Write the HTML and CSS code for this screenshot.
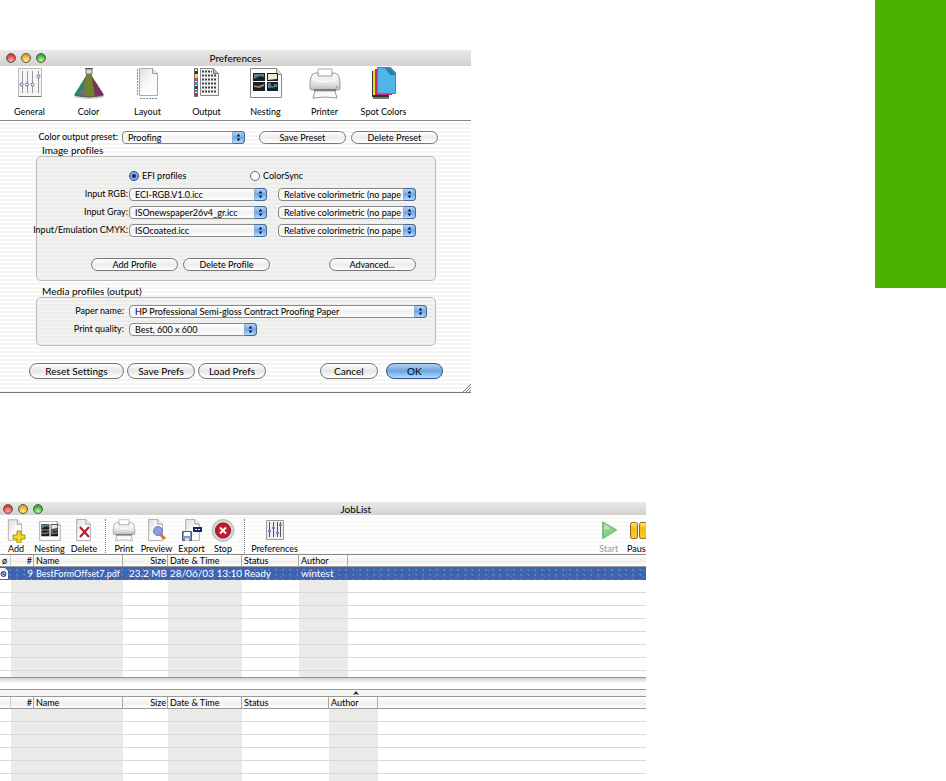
FILE: index.html
```html
<!DOCTYPE html>
<html lang="en">
<head>
<meta charset="utf-8">
<title>Preferences and JobList</title>
<link rel="stylesheet" href="styles.css">
</head>
<body>
<svg class="defs" aria-hidden="true">
  <defs>
    <linearGradient id="paper" x1="0" y1="0" x2="1" y2="1"><stop offset="0" stop-color="#ddd"/><stop offset=".5" stop-color="#fafafa"/><stop offset="1" stop-color="#fff"/></linearGradient>
    <linearGradient id="shell" x1="0" y1="0" x2="0" y2="1"><stop offset="0" stop-color="#fff"/><stop offset=".6" stop-color="#e6e6e6"/><stop offset="1" stop-color="#bbb"/></linearGradient>
    <linearGradient id="flask" x1="0" y1="0" x2="1" y2="0"><stop offset="0" stop-color="#1c9060"/><stop offset=".3" stop-color="#68746c"/><stop offset=".55" stop-color="#6c7c20"/><stop offset=".75" stop-color="#7a4040"/><stop offset="1" stop-color="#502090"/></linearGradient>
    <linearGradient id="gold" x1="0" y1="0" x2="0" y2="1"><stop offset="0" stop-color="#fff080"/><stop offset=".35" stop-color="#f4bc18"/><stop offset="1" stop-color="#fccc30"/></linearGradient>
  </defs>
  <symbol id="arrows" viewBox="0 0 12 12"><path d="M6 2 8 5H4zM6 10 4 7h4z" fill="#061640"/></symbol>
  <symbol id="page" viewBox="0 0 18 24"><path d="M1.500.5h10l5 5v18h-15z" fill="url(#paper)" stroke="#aaa"/><path d="M11.500.5v5h5" fill="#eee" stroke="#999"/></symbol>
  <symbol id="photos" viewBox="0 0 32 30">
    <path d="M.5.500h26l5 6v23H.5z" fill="#fcfcfc" stroke="#888"/><path d="M26.500.5v6h5" fill="#ddd" stroke="#888"/>
    <path d="M3 5h12v8H3zM17 5h11v8H17zM3 14h12v9H3zM17 14h11v9H17z" fill="#182024"/>
    <path d="M4 6h10v3l-4-1-6 3z" fill="#638086"/><path d="M18 6h9v5l-9 1z" fill="#ece8d8"/><path d="M4 17l4 1 6-2v2l-5 2-5-1z" fill="#b87070"/><path d="M18 15h3v3h3v-2h3v3l-9 1z" fill="#4d8090"/>
  </symbol>
  <symbol id="printer" viewBox="0 0 32 32">
    <path d="M9 8V1h14v7" fill="#fff" stroke="#aaa"/>
    <path d="M2 9q1-4 5-4h2v3h14V5h2q4 0 5 4l1 6v6l-2 1H3l-2-1v-6z" fill="url(#shell)" stroke="#999"/>
    <path d="M3 11q13 5 26 0" fill="none" stroke="#fff"/><path d="M5 21h22v2H5z" fill="#777"/>
    <path d="M6 23h20l2 7q-12-2-24 0z" fill="#fafafa" stroke="#999"/><path d="M27 18h2v2h-2z" fill="#8c8"/>
  </symbol>
</svg>

<main class="figures">
  <section class="window prefs" aria-label="Preferences">
    <header class="titlebar">
      <div class="lights"><button class="light red" aria-label="Close"></button><button class="light amber" aria-label="Minimize"></button><button class="light green" aria-label="Zoom"></button></div>
      <h1>Preferences</h1>
    </header>
    <nav class="tabs">
      <button><svg width="24" height="34" viewBox="0 0 24 34"><path d="M.5 2.500h23v28H.5z" fill="#f5f5f5" stroke="#bbb"/><path d="M.5 30.500h23" stroke="#777"/><path d="M4.500 5v22M9.500 5v22M14.500 5v22M20.500 5v22" stroke="#999"/><g fill="#fff" stroke="#4666c0"><circle cx="3.500" cy="18.500" r="1.500"/><circle cx="9" cy="18.500" r="1.500"/><circle cx="14.500" cy="18.500" r="1.500"/><circle cx="20.500" cy="10.500" r="1.500"/></g></svg>General</button>
      <button><svg width="32" height="34" viewBox="0 0 32 34"><ellipse cx="16" cy="30" rx="15" ry="3" fill="#ccc"/><path d="M13 3v7L1 29q15 4 30 0L19 10V3z" fill="url(#flask)"/><path d="M14 3h4v8l4 18q-6 2-12 0z" fill="#74842c"/><path d="M2 29l11-19-4 13z" fill="#218b55"/><path d="M7 30l6-18-1 19z" fill="#6a746c"/><path d="M19 13l11 16-8 1z" fill="#783460"/><path d="M13 3h6v5h-6z" fill="#d8ddd8" stroke="#777"/><path d="M12 2.500h8" stroke="#555"/><path d="M2 29.500q14 3 28 0" fill="none" stroke="#555"/></svg>Color</button>
      <button><svg width="24" height="34" viewBox="0 0 24 34"><path d="M3.500 2.500h13l5 5v22h-18z" fill="url(#paper)" stroke="#aaa"/><path d="M16.500 2.500v5h5" fill="#eee" stroke="#999"/><path d="M1.500 3v27M4 32.500h18" stroke="#888" stroke-dasharray="2 1"/></svg>Layout</button>
      <button><svg width="26" height="34" viewBox="0 0 26 34"><path d="M6.500 2.500h13l5 5v22h-18z" fill="#f5f5f5" stroke="#888"/><path d="M8 5.500h10M8 9.500h15M8 13.500h15M8 17.500h15M8 21.500h15M8 25.500h15" stroke="#444" stroke-width="2" stroke-dasharray="2 1"/><path d="M19.500 2.500v5h5" fill="#bbb" stroke="#777"/><path d="M.5 2.500h3v28h-3z" fill="#eee" stroke="#666"/><path d="M1 5h3v3H1z" fill="#333"/><path d="M1 8h3v3H1z" fill="#e8e020"/><path d="M1 12h3v3H1z" fill="#e03088"/><path d="M1 16h3v3H1z" fill="#28a0c8"/><path d="M1 20h3v3H1z" fill="#503090"/><path d="M1 24h3v2H1z" fill="#20a878"/><path d="M1 27h3v3H1z" fill="#e02040"/></svg>Output</button>
      <button><svg width="32" height="34" viewBox="0 -2 32 34"><use href="#photos" width="32" height="30"/></svg>Nesting</button>
      <button><svg width="32" height="34" viewBox="0 -2 32 34"><use href="#printer" width="32" height="32"/></svg>Printer</button>
      <button><svg width="26" height="34" viewBox="0 0 26 34"><path d="M2 8h16v25H2z" fill="#777"/><path d="M1 5h17v26H1z" fill="#35342c"/><path d="M2 4h17v25H2z" fill="#ece020"/><path d="M4 3h17v26H4z" fill="#c52878"/><path d="M6.500 1.500h13l5 5v21h-18z" fill="#4db6e6" stroke="#2c8dbb"/><path d="M14 2h5l5 5v2h-5z" fill="#287fae"/></svg>Spot Colors</button>
    </nav>
    <form class="pane" onsubmit="return false">
      <div class="row preset">
        <label for="preset">Color output preset:</label>
        <span class="popup"><select id="preset"><option>Proofing</option></select><svg><use href="#arrows"/></svg></span>
        <button class="push first">Save Preset</button><button class="push">Delete Preset</button>
      </div>
      <h2>Image profiles</h2>
      <div class="group image">
        <div class="row radios">
          <label><input type="radio" name="engine" checked>EFI profiles</label>
          <label><input type="radio" name="engine">ColorSync</label>
        </div>
        <div class="row profile"><label for="rgb">Input RGB:</label>
          <span class="popup"><select id="rgb"><option>ECI-RGB.V1.0.icc</option></select><svg><use href="#arrows"/></svg></span>
          <span class="popup"><select aria-label="RGB intent"><option>Relative colorimetric (no pape</option></select><svg><use href="#arrows"/></svg></span></div>
        <div class="row profile"><label for="gray">Input Gray:</label>
          <span class="popup"><select id="gray"><option>ISOnewspaper26v4_gr.icc</option></select><svg><use href="#arrows"/></svg></span>
          <span class="popup"><select aria-label="Gray intent"><option>Relative colorimetric (no pape</option></select><svg><use href="#arrows"/></svg></span></div>
        <div class="row profile"><label for="cmyk">Input/Emulation CMYK:</label>
          <span class="popup"><select id="cmyk"><option>ISOcoated.icc</option></select><svg><use href="#arrows"/></svg></span>
          <span class="popup"><select aria-label="CMYK intent"><option>Relative colorimetric (no pape</option></select><svg><use href="#arrows"/></svg></span></div>
        <div class="row tools"><button class="push">Add Profile</button><button class="push">Delete Profile</button><button class="push last">Advanced...</button></div>
      </div>
      <h2>Media profiles (output)</h2>
      <div class="group media">
        <div class="row"><label for="paper-name">Paper name:</label><span class="popup wide"><select id="paper-name"><option>HP Professional Semi-gloss Contract Proofing Paper</option></select><svg><use href="#arrows"/></svg></span></div>
        <div class="row"><label for="quality">Print quality:</label><span class="popup"><select id="quality"><option>Best, 600 x 600</option></select><svg><use href="#arrows"/></svg></span></div>
      </div>
      <footer class="actions">
        <button class="big reset">Reset Settings</button><button class="big">Save Prefs</button><button class="big">Load Prefs</button>
        <button class="big cancel">Cancel</button><button class="big ok">OK</button>
      </footer>
      <svg class="grip" width="8" height="8" viewBox="0 0 8 8"><path d="M0 8 8 0M3 8l5-5M6 8l2-2" stroke="#777"/></svg>
    </form>
  </section>

  <section class="window jobs" aria-label="JobList">
    <header class="titlebar">
      <div class="lights"><button class="light red" aria-label="Close"></button><button class="light amber" aria-label="Minimize"></button><button class="light green" aria-label="Zoom"></button></div>
      <h1>JobList</h1>
    </header>
    <nav class="toolbar">
      <button><svg width="20" height="24" viewBox="0 0 20 24"><use href="#page" x="1" width="16" height="22"/><path d="M11 12h4v4h4v4h-4v4h-4v-4H7v-4h4z" fill="#f4d820" stroke="#a89010"/></svg>Add</button>
      <button><svg width="22" height="24" viewBox="0 -2 22 24"><use href="#photos" width="22" height="20"/></svg>Nesting</button>
      <button><svg width="18" height="24" viewBox="0 0 18 24"><use href="#page" width="17" height="22"/><path d="M5 8l9 10M14 8 5 18" stroke="#b81828" stroke-width="2"/></svg>Delete</button>
      <i class="divider"></i>
      <button><svg width="24" height="24" viewBox="0 0 24 24"><use href="#printer" width="24" height="23"/></svg>Print</button>
      <button><svg width="20" height="24" viewBox="0 0 20 24"><use href="#page" width="17" height="22"/><path d="M13 15l5 5" stroke="#d9782c" stroke-width="3"/><circle cx="11" cy="12" r="4.500" fill="#8ca0e0" stroke="#6878b0"/></svg>Preview</button>
      <button><svg width="20" height="24" viewBox="0 0 20 24"><use href="#page" x="2" width="17" height="22"/><path d="M11 8h9v5h-9z" fill="#182858"/><path d="M13 10h2v1h-2zM16 10h2v1h-2z" fill="#fff"/><path d="M.5 12.500h9v9h-9z" fill="#8298bc" stroke="#485878"/><path d="M2 13h6v4H2z" fill="#fff"/><path d="M3 19h4v3H3z" fill="#ddd"/></svg>Export</button>
      <button><svg width="24" height="24" viewBox="0 0 24 24"><circle cx="12" cy="11.500" r="11" fill="#d2d2d0" stroke="#bbb"/><circle cx="12" cy="11.500" r="7.500" fill="#c91730" stroke="#80101c"/><path d="M9 8.500l6 6M15 8.500l-6 6" stroke="#fff" stroke-width="2"/></svg>Stop</button>
      <i class="divider"></i>
      <button><svg width="18" height="24" viewBox="0 0 18 24"><path d="M.5 1.500h17v19H.5z" fill="#eee" stroke="#999"/><path d="M3.500 3v15M7.500 3v15M11.500 3v15M14.500 3v15" stroke="#555"/><path d="M2 11h3v2H2zM6 8h3v2H6zM10 13h3v2h-3zM13 5h3v2h-3z" fill="#7088c8"/></svg>Preferences</button>
      <span></span>
      <button class="off"><svg width="18" height="24" viewBox="0 0 18 24"><path d="M3 3.500 16 11 3 19z" fill="#90d088" stroke="#7cc080" stroke-width="2" stroke-linejoin="round"/><path d="M4 5l7 4-7 2z" fill="#b9e6ac"/></svg>Start</button>
      <button class="pause"><svg width="18" height="24" viewBox="0 0 18 24"><rect x=".5" y="3.500" width="7" height="16" rx="2" fill="url(#gold)" stroke="#8a6818"/><rect x="9.500" y="3.500" width="7" height="16" rx="2" fill="url(#gold)" stroke="#8a6818"/></svg>Pause</button>
    </nav>
    <table class="list">
      <colgroup><col class="c-flag"><col class="c-num stripe"><col class="c-name stripe"><col class="c-size"><col class="c-date stripe"><col class="c-status"><col class="c-author stripe"><col></colgroup>
      <thead><tr><th>ø</th><th class="num">#</th><th>Name</th><th class="num">Size</th><th>Date &amp; Time</th><th>Status</th><th>Author</th><th></th></tr></thead>
      <tbody>
        <tr class="selected"><td><svg class="status" width="9" height="11" viewBox="0 0 9 11"><path d="M0 0h5l3 3v8H0z" fill="#fff"/><circle cx="3.500" cy="6" r="2.500" fill="#ccd" stroke="#223070"/><path d="M3 4v2l2 1" fill="none" stroke="#223070"/></svg></td><td class="num">9</td><td class="file">BestFormOffset7.pdf</td><td class="num">23.2 MB</td><td>28/06/03 13:10</td><td>Ready</td><td>wintest</td><td></td></tr>
        <tr><td></td><td></td><td></td><td></td><td></td><td></td><td></td><td></td></tr>
        <tr><td></td><td></td><td></td><td></td><td></td><td></td><td></td><td></td></tr>
        <tr><td></td><td></td><td></td><td></td><td></td><td></td><td></td><td></td></tr>
        <tr><td></td><td></td><td></td><td></td><td></td><td></td><td></td><td></td></tr>
        <tr><td></td><td></td><td></td><td></td><td></td><td></td><td></td><td></td></tr>
        <tr><td></td><td></td><td></td><td></td><td></td><td></td><td></td><td></td></tr>
        <tr><td></td><td></td><td></td><td></td><td></td><td></td><td></td><td></td></tr>
        <tr class="short"><td></td><td></td><td></td><td></td><td></td><td></td><td></td><td></td></tr>
      </tbody>
    </table>
    <div class="splitter"></div>
    <div class="handle"><svg width="6" height="4" viewBox="0 0 6 4"><path d="M3 0 6 4 3 3 0 4z" fill="#222"/></svg></div>
    <table class="list lower">
      <colgroup><col class="c-flag"><col class="c-num stripe"><col class="c-name stripe"><col class="c-size"><col class="c-date stripe"><col class="c-status"><col class="c-author stripe"><col></colgroup>
      <thead><tr><th></th><th class="num">#</th><th>Name</th><th class="num">Size</th><th>Date &amp; Time</th><th>Status</th><th>Author</th><th></th></tr></thead>
      <tbody>
        <tr><td></td><td></td><td></td><td></td><td></td><td></td><td></td><td></td></tr>
        <tr><td></td><td></td><td></td><td></td><td></td><td></td><td></td><td></td></tr>
        <tr><td></td><td></td><td></td><td></td><td></td><td></td><td></td><td></td></tr>
        <tr><td></td><td></td><td></td><td></td><td></td><td></td><td></td><td></td></tr>
        <tr><td></td><td></td><td></td><td></td><td></td><td></td><td></td><td></td></tr>
        <tr class="short"><td></td><td></td><td></td><td></td><td></td><td></td><td></td><td></td></tr>
      </tbody>
    </table>
  </section>
</main>
<aside class="chapter-tab"></aside>
</body>
</html>
```

FILE: styles.css
```css
* { box-sizing: border-box; }

body {
  margin: 0;
  display: flex;
  justify-content: space-between;
  align-items: flex-start;
  background: #fff;
  color: #000;
  font: 9px/12px Lato, "Open Sans", sans-serif;
  font-variant-ligatures: none;
}

button, select, input { font: inherit; font-variant-ligatures: none; color: inherit; margin: 0; }
button { padding: 0; border: 0; background: none; white-space: nowrap; }
h1, h2 { margin: 0; font-weight: 400; }
svg { display: block; flex: none; }
.defs { position: absolute; width: 0; height: 0; }

.figures { width: 92.5%; padding-top: 50px; }
.chapter-tab { width: 7.5%; height: 288px; background: #4bb000; }

/* Window chrome */
.window { overflow: hidden; }
.prefs { width: 53.8%; }
.jobs { width: 73.8%; margin-top: 109px; }

.titlebar {
  display: grid;
  grid-template-columns: 1fr auto 1fr;
  align-items: center;
  height: 16px;
  background: linear-gradient(#e9e9e8, #d2d1cf);
}
.titlebar h1 { font-size: 10px; }
.lights { display: flex; gap: 5px; padding-left: 6px; }
.light { width: 10px; height: 10px; border: 1px solid #555; border-radius: 50%; }
.red { background: radial-gradient(circle at 50% 80%, #ffb0a0, #d93a3e 70%); }
.amber { background: radial-gradient(circle at 50% 80%, #fff490, #e8a020 70%); }
.green { background: radial-gradient(circle at 50% 80%, #c0ff90, #34a838 70%); }
.jobs .titlebar { height: 13px; padding-left: 66px; }
.jobs .lights { padding-left: 3px; margin-left: -66px; }

/* Preferences */
.tabs { display: flex; height: 55px; border-bottom: 1px solid #888; }
.tabs button {
  width: 59px;
  display: flex;
  flex-direction: column;
  align-items: center;
  gap: 6px;
}
.pane {
  position: relative;
  padding: 9px 28px 0 29px;
  border-bottom: 1px solid #777;
  background: repeating-linear-gradient(#fff 0 2px, #f5f5f3 2px 4px);
}
.row { display: flex; align-items: center; height: 14px; }
.preset label { width: 93px; padding-right: 4px; text-align: right; white-space: nowrap; }
.preset .popup { width: 123px; }
.push {
  width: 87px;
  height: 13px;
  margin-right: 5px;
  border: 1px solid #777;
  border-radius: 7px;
  line-height: 11px;
  background: linear-gradient(#fff, #ececec 50%, #fff);
}
.preset .first { margin-left: 14px; }
.pane h2 { padding-left: 13px; height: 12px; font-size: 10px; line-height: 12px; }
.group {
  margin: 0 7px;
  border: 1px solid #bbb;
  border-radius: 5px;
  background: repeating-linear-gradient(#f2f2f1 0 2px, #ececeb 2px 4px);
}
.popup { position: relative; display: block; height: 13px; }
.popup select {
  display: block;
  width: 100%;
  height: 13px;
  padding: 0 13px 0 5px;
  border: 1px solid #888;
  border-radius: 4px;
  appearance: none;
  background: linear-gradient(#fff, #f1f1f1 50%, #fff);
  line-height: 11px;
}
.popup svg {
  position: absolute;
  top: 0;
  right: 0;
  width: 13px;
  height: 13px;
  border: 1px solid #466a9c;
  border-left-color: #86b0dc;
  border-radius: 0 4px 4px 0;
  background: linear-gradient(#b8d4f0, #6ea8e4 50%, #b4dcff);
  pointer-events: none;
}
.image { height: 125px; padding-top: 12px; margin-bottom: 4px; }
.image > .row { margin-bottom: 4px; }
.radios label { display: flex; align-items: center; gap: 3px; width: 121px; }
.radios { padding-left: 92px; }
.radios input {
  appearance: none;
  width: 10px;
  height: 10px;
  border: 1px solid #666;
  border-radius: 50%;
  background: #fff;
}
.radios input:checked { border-color: #223c88; background: radial-gradient(#102050 0 1px, #90b8f0 3px); }
.profile label { width: 92px; padding-right: 1px; display: flex; justify-content: flex-end; white-space: nowrap; }
.profile .popup { width: 138px; }
.profile .popup + .popup { margin-left: 11px; }
.image .tools { padding: 0 14px 0 54px; margin-top: 20px; }
.tools .last { margin-left: auto; }
.media { height: 49px; padding-top: 6px; }
.media .row { margin-bottom: 4px; }
.media label { width: 92px; padding-right: 5px; text-align: right; }
.media .popup { width: 128px; }
.media .popup.wide { width: 298px; }
.actions { display: flex; gap: 3px; padding: 17px 0 13px; }
.big {
  width: 68px;
  height: 16px;
  border: 1px solid #777;
  border-radius: 8px;
  font-size: 10px;
  line-height: 14px;
  background: linear-gradient(#fff, #e6e6e6 50%, #fff);
}
.reset { width: 95px; }
.cancel { width: 58px; margin-left: auto; margin-right: 5px; }
.ok { width: 57px; border-color: #344f90; background: linear-gradient(#b4d2f0, #6aa5e0 50%, #b0dcff); }
.grip { position: absolute; right: 0; bottom: 0; }

/* Job list */
.toolbar {
  display: grid;
  grid-template-columns: 32px 35px 34px 8px 30px 35px 35px 28px 14px 47px 1fr 32px 28px;
  margin-right: -7px;
  height: 40px;
  padding-top: 4px;
  border-bottom: 1px solid #888;
  background: repeating-linear-gradient(#fff 0 2px, #f9f9f8 2px 4px);
}
.toolbar button { display: flex; flex-direction: column; align-items: center; }
.toolbar .off { color: #999; }
.divider { justify-self: center; height: 34px; border-left: 1px dotted #777; }

.list { width: 100%; table-layout: fixed; border-collapse: separate; border-spacing: 0; }
.c-flag { width: 11px; }
.c-num { width: 23px; }
.c-name { width: 89px; }
.c-size { width: 45px; }
.c-date { width: 74px; }
.c-status { width: 57px; }
.c-author { width: 49px; }
.lower .c-status { width: 87px; }
.stripe { background: #eaeae9; }
.list th, .list td {
  height: 13px;
  padding: 0 0 0 2px;
  overflow: hidden;
  white-space: nowrap;
  text-align: left;
  font-weight: 400;
  line-height: 11px;
}
.list th {
  height: 12px;
  border-right: 1px solid #aaa;
  border-bottom: 1px solid #999;
  background: linear-gradient(#fff, #efefed 60%, #fff);
}
.list th:first-child { border-right-color: #ccc; }
.list th:last-child { border-right: 0; }
.list td { border-bottom: 1px solid #d9d9d9; }
.list .num { text-align: right; padding-right: 1px; }
.list .short td { height: 6px; border: 0; }
.lower .short td { height: 8px; }
.list .selected td { color: #fff; font-size: 10px; border-bottom: 0; }
.list .selected .file { font-size: 9px; }
.selected {
  background-color: #4262b0;
  background-image: radial-gradient(circle, #4b8fd0 0 1px, transparent 1px), radial-gradient(circle, #3e78c4 0 1px, transparent 1px);
  background-size: 7px 5px, 11px 7px;
}
.list .selected td:first-child { padding: 0; }
.splitter { height: 12px; border-top: 1px solid #8890b8; background: linear-gradient(#d4d2d2, #fff 50%); }
.handle { display: flex; justify-content: center; height: 8px; padding: 1px 0 0 66px; border: 1px solid #999; border-width: 1px 0; background: #f6f6f5; }
```
